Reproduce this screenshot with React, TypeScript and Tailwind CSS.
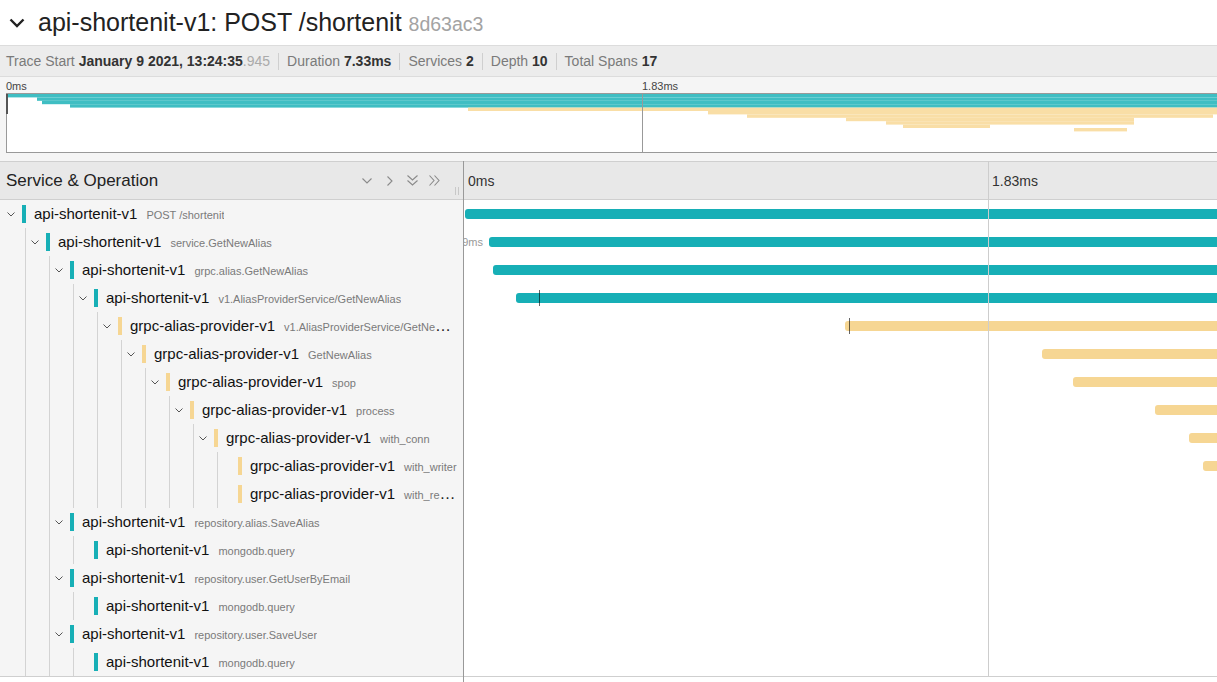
import React from 'react';

type Row = {
  level: number;
  service: string;
  op: string;
  color: 'teal' | 'yellow';
  kids: boolean;
  bar?: number;
  tick?: number;
  label?: string;
};

const API = 'api-shortenit-v1';
const GRPC = 'grpc-alias-provider-v1';

const rows: Row[] = [
  { level: 0, service: API, op: 'POST /shortenit', color: 'teal', kids: true, bar: 1 },
  { level: 1, service: API, op: 'service.GetNewAlias', color: 'teal', kids: true, bar: 25, label: '0.09ms' },
  { level: 2, service: API, op: 'grpc.alias.GetNewAlias', color: 'teal', kids: true, bar: 29 },
  { level: 3, service: API, op: 'v1.AliasProviderService/GetNewAlias', color: 'teal', kids: true, bar: 52, tick: 75 },
  { level: 4, service: GRPC, op: 'v1.AliasProviderService/GetNewAlias', color: 'yellow', kids: true, bar: 381, tick: 385 },
  { level: 5, service: GRPC, op: 'GetNewAlias', color: 'yellow', kids: true, bar: 578 },
  { level: 6, service: GRPC, op: 'spop', color: 'yellow', kids: true, bar: 609 },
  { level: 7, service: GRPC, op: 'process', color: 'yellow', kids: true, bar: 691 },
  { level: 8, service: GRPC, op: 'with_conn', color: 'yellow', kids: true, bar: 725 },
  { level: 9, service: GRPC, op: 'with_writer', color: 'yellow', kids: false, bar: 739 },
  { level: 9, service: GRPC, op: 'with_reader', color: 'yellow', kids: false },
  { level: 2, service: API, op: 'repository.alias.SaveAlias', color: 'teal', kids: true },
  { level: 3, service: API, op: 'mongodb.query', color: 'teal', kids: false },
  { level: 2, service: API, op: 'repository.user.GetUserByEmail', color: 'teal', kids: true },
  { level: 3, service: API, op: 'mongodb.query', color: 'teal', kids: false },
  { level: 2, service: API, op: 'repository.user.SaveUser', color: 'teal', kids: true },
  { level: 3, service: API, op: 'mongodb.query', color: 'teal', kids: false },
];

const mini: [number, number, 't' | 'y'][] = [
  [7, 1217, 't'],
  [37, 1217, 't'],
  [42, 1217, 't'],
  [70, 1217, 't'],
  [468, 1217, 'y'],
  [708, 1217, 'y'],
  [747, 1213, 'y'],
  [846, 1134, 'y'],
  [886, 1134, 'y'],
  [903, 990, 'y'],
  [1074, 1127, 'y'],
];

function Sep() {
  return <span className="mx-[8px] h-[17px] w-px bg-[#cfcfcf]" />;
}

function TreeRow({ r }: { r: Row }) {
  return (
    <div className="relative h-[28px] flex items-center pr-[4px]" style={{ paddingLeft: r.level * 24 }}>
      {Array.from({ length: r.level }).map((_, k) => (
        <div key={k} className="absolute top-0 bottom-0 w-px bg-[#d3d3d3]" style={{ left: 25 + 24 * k }} />
      ))}
      <div className="w-[22px] shrink-0 flex items-center">
        {r.kids && (
          <svg className="ml-[7px]" width="8" height="5" viewBox="0 0 8 5">
            <path d="M0.5 0.5L4 4L7.5 0.5" fill="none" stroke="#555" strokeWidth="1" />
          </svg>
        )}
      </div>
      <div className={r.color === 'teal' ? 'w-[4px] h-[18px] shrink-0 bg-[#17afb6]' : 'w-[4px] h-[18px] shrink-0 bg-[#f6d693]'} />
      <div className="ml-[8px] min-w-0 truncate whitespace-nowrap">
        <span className="text-[15px] text-[#111]">{r.service}</span>
        <span className="ml-[9px] text-[11px] text-[#7a7a7a]">{r.op}</span>
      </div>
    </div>
  );
}

function BarRow({ r }: { r: Row }) {
  return (
    <div className="relative h-[28px]">
      {r.label && (
        <span className="absolute right-[calc(100%-19px)] top-[7px] leading-[14px] text-[11px] text-[#999] whitespace-nowrap">
          {r.label}
        </span>
      )}
      {r.bar !== undefined && (
        <div
          className={
            r.color === 'teal'
              ? 'absolute top-[9px] h-[10px] right-[-6px] rounded-[3px] bg-[#17afb6]'
              : 'absolute top-[9px] h-[10px] right-[-6px] rounded-[3px] bg-[#f6d693]'
          }
          style={{ left: r.bar }}
        />
      )}
      {r.tick !== undefined && (
        <div className="absolute top-[6px] h-[16px] w-px bg-[rgba(0,0,0,0.6)]" style={{ left: r.tick }} />
      )}
    </div>
  );
}

export default function App() {
  return (
    <div className="w-[1217px] h-[682px] overflow-hidden bg-white font-['Liberation_Sans',Arial,sans-serif] text-[#222]">
      {/* Title */}
      <div className="h-[45px] flex items-center">
        <svg className="ml-[9px]" width="16" height="10" viewBox="0 0 16 10">
          <path d="M1.5 1.5L8 8L14.5 1.5" fill="none" stroke="#222" strokeWidth="2.4" />
        </svg>
        <h1 className="ml-[13px] text-[25px] leading-none text-[#222] whitespace-nowrap">
          api-shortenit-v1: POST /shortenit <span className="text-[19.5px] text-[#a3a3a3]">8d63ac3</span>
        </h1>
      </div>

      {/* Stats */}
      <div className="h-[32px] bg-[#ececec] border-y border-[#dcdcdc] flex items-center pl-[6px] text-[14px] text-[#7a7a7a] whitespace-nowrap">
        <span>
          Trace Start <b className="text-[#333]">January 9 2021, 13:24:35</b>
          <span className="text-[#aaa]">.945</span>
        </span>
        <Sep />
        <span>
          Duration <b className="text-[#333]">7.33ms</b>
        </span>
        <Sep />
        <span>
          Services <b className="text-[#333]">2</b>
        </span>
        <Sep />
        <span>
          Depth <b className="text-[#333]">10</b>
        </span>
        <Sep />
        <span>
          Total Spans <b className="text-[#333]">17</b>
        </span>
      </div>

      {/* Minimap */}
      <div className="h-[84px] bg-[#f5f5f5]">
        <div className="relative h-[16px] text-[11px] leading-[14px] text-[#444]">
          <span className="absolute left-[6px] top-[2px]">0ms</span>
          <span className="absolute left-[642px] top-[2px]">1.83ms</span>
        </div>
        <div className="relative ml-[6px] h-[60px] border border-r-0 border-[#999] bg-white">
          <svg width="1210" height="58" className="block">
            {mini.map(([s, e, c], i) => (
              <rect key={i} x={s - 7} y={i * 3.4} width={e - s} height={3.4} fill={c === 't' ? '#3fbec3' : '#f9dea6'} />
            ))}
            <line x1="635.5" y1="0" x2="635.5" y2="58" stroke="#999" strokeWidth="1" />
          </svg>
          <div className="absolute left-[-1px] top-0 w-[2px] h-[20px] bg-[#555]" />
        </div>
      </div>

      {/* Trace detail */}
      <div className="flex">
        <div className="w-[463px] shrink-0">
          <div className="relative h-[39px] border-y border-[#cfcfcf] bg-[#e8e8e8] flex items-center pl-[6px] pr-[23px]">
            <span className="text-[17px] text-[#222]">Service &amp; Operation</span>
            <div className="ml-auto flex items-center">
              <svg width="10" height="6" viewBox="0 0 10 6">
                <path d="M0.5 0.5L5 5L9.5 0.5" fill="none" stroke="#8a8a8a" strokeWidth="1.1" />
              </svg>
              <svg className="ml-[15px]" width="6" height="10" viewBox="0 0 6 10">
                <path d="M0.5 0.5L5 5L0.5 9.5" fill="none" stroke="#8a8a8a" strokeWidth="1.1" />
              </svg>
              <svg className="ml-[14px]" width="11" height="11" viewBox="0 0 11 11">
                <path d="M0.5 0.5L5.5 5L10.5 0.5M0.5 5.5L5.5 10L10.5 5.5" fill="none" stroke="#8a8a8a" strokeWidth="1.1" />
              </svg>
              <svg className="ml-[11px]" width="11" height="11" viewBox="0 0 11 11">
                <path d="M0.5 0.5L5 5.5L0.5 10.5M5.5 0.5L10 5.5L5.5 10.5" fill="none" stroke="#8a8a8a" strokeWidth="1.1" />
              </svg>
            </div>
            <div className="absolute right-[4px] bottom-[4px] flex gap-[2px]">
              <span className="w-px h-[8px] bg-[#c8c8c8]" />
              <span className="w-px h-[8px] bg-[#c8c8c8]" />
            </div>
          </div>
          <div className="bg-[#f5f5f5] border-b border-[#cfcfcf]">
            {rows.map((r, i) => (
              <TreeRow key={i} r={r} />
            ))}
          </div>
        </div>
        <div className="w-px shrink-0 h-[521px] bg-[#999]" />
        <div className="relative flex-1 overflow-hidden">
          <div className="relative h-[39px] border-y border-[#cfcfcf] bg-[#e8e8e8] text-[14px] text-[#333]">
            <span className="absolute left-[4px] top-1/2 -translate-y-1/2">0ms</span>
            <span className="absolute left-[528px] top-1/2 -translate-y-1/2">1.83ms</span>
          </div>
          <div className="border-b border-[#cfcfcf]">
            {rows.map((r, i) => (
              <BarRow key={i} r={r} />
            ))}
          </div>
          <div className="absolute left-[524px] top-0 h-[515px] w-px bg-[#cdcdcd]" />
        </div>
      </div>
    </div>
  );
}
